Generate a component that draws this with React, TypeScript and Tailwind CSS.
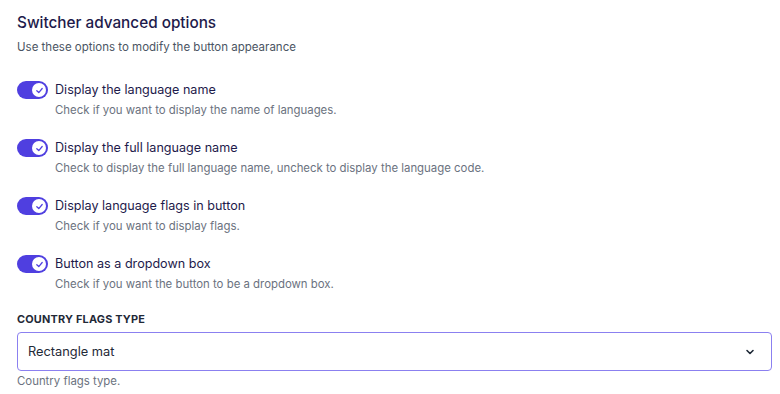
import { useState } from "react";

const options = [
  { label: "Display the language name", help: "Check if you want to display the name of languages." },
  { label: "Display the full language name", help: "Check to display the full language name, uncheck to display the language code." },
  { label: "Display language flags in button", help: "Check if you want to display flags." },
  { label: "Button as a dropdown box", help: "Check if you want the button to be a dropdown box." },
];

function Toggle({ on, onClick }: { on: boolean; onClick: () => void }) {
  return (
    <button
      onClick={onClick}
      className={`flex h-[18px] w-[31px] shrink-0 items-center rounded-full px-[2px] ${on ? "justify-end bg-[#4f3fe0]" : "justify-start bg-gray-300"}`}
    >
      <span className="flex h-[14px] w-[14px] items-center justify-center rounded-full bg-white">
        {on && (
          <svg width="9" height="9" viewBox="0 0 10 10" fill="none">
            <path d="M2 5.2 4.2 7.3 8 2.8" stroke="#4f3fe0" strokeWidth="1.4" strokeLinecap="round" strokeLinejoin="round" />
          </svg>
        )}
      </span>
    </button>
  );
}

export default function App() {
  const [values, setValues] = useState([true, true, true, true]);

  return (
    <div className="h-[394px] w-[780px] bg-white px-[17px] pt-[12px] font-['Inter',sans-serif]">
      <h2 className="text-[15.3px] leading-[22px] font-medium text-[#1e1b4b]">Switcher advanced options</h2>
      <p className="mt-[5px] text-[11.5px] leading-[16px] text-[#4b5563]">Use these options to modify the button appearance</p>

      <div className="mt-[26px] flex flex-col gap-[22px]">
        {options.map((o, i) => (
          <div key={o.label}>
            <div className="flex items-center gap-[7px]">
              <Toggle on={values[i]} onClick={() => setValues(values.map((v, j) => (j === i ? !v : v)))} />
              <span className="text-[12.6px] leading-[18px] text-[#1e1b4b]">{o.label}</span>
            </div>
            <p className="mt-[4px] pl-[38px] text-[11.4px] leading-[14px] text-[#6b7280]">{o.help}</p>
          </div>
        ))}
      </div>

      <div className="mt-[20px] text-[10.9px] leading-[16px] font-bold tracking-[0.2px] text-[#1f2937]">COUNTRY FLAGS TYPE</div>
      <div className="mt-[5px] flex h-[39px] w-[755px] items-center justify-between rounded-[4px] border border-[#8b80f0] px-[10px]">
        <span className="text-[12.8px] text-[#1f2937]">Rectangle mat</span>
        <svg width="12" height="12" viewBox="0 0 12 12" fill="none" className="mr-[5px]">
          <path d="M3 4.5 6 7.5 9 4.5" stroke="#1f2937" strokeWidth="1.6" strokeLinecap="round" strokeLinejoin="round" />
        </svg>
      </div>
      <p className="mt-[2px] text-[11.4px] leading-[16px] text-[#6b7280]">Country flags type.</p>
    </div>
  );
}
